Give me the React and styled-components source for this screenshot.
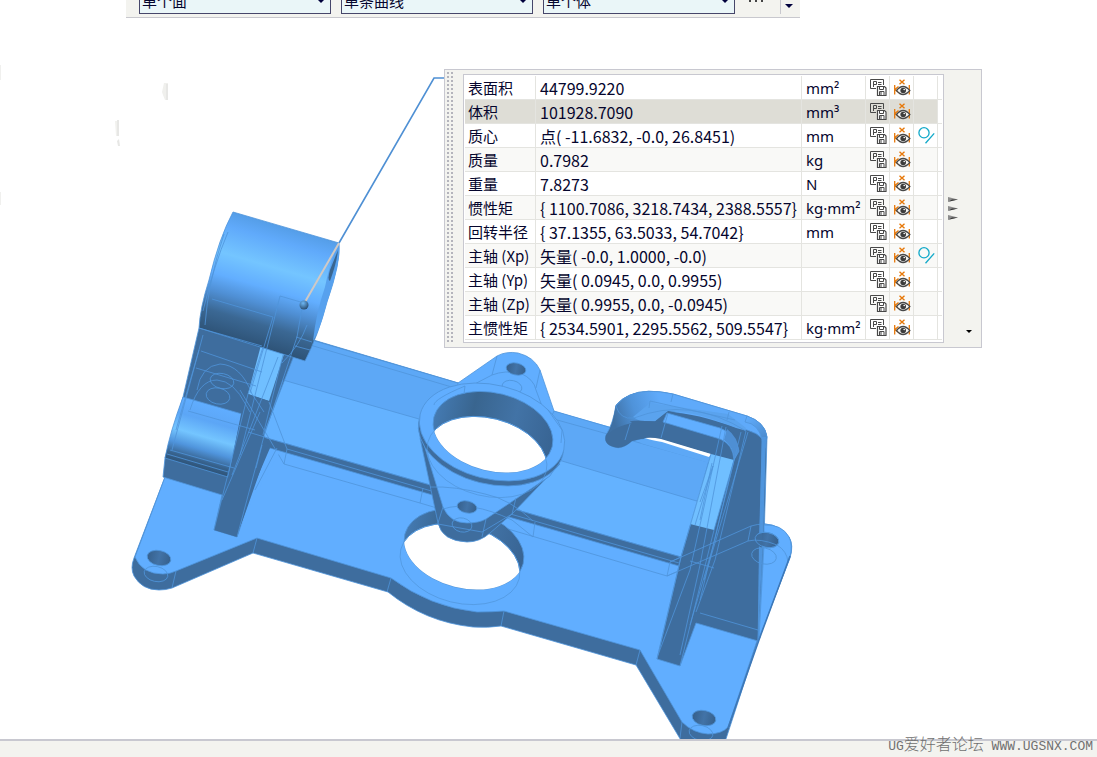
import React from 'react'
import styled, { createGlobalStyle } from 'styled-components'

const filters = [
    { id: 'face', label: '面规则', value: '单个面' },
    { id: 'curve', label: '曲线规则', value: '单条曲线' },
    { id: 'body', label: '体规则', value: '单个体' },
];

const rows = [
    { name: '表面积', value: '44799.9220', unit: 'mm²' },
    { name: '体积', value: '101928.7090', unit: 'mm³', active: true },
    { name: '质心', value: '点( -11.6832, -0.0, 26.8451)', unit: 'mm', geometry: true },
    { name: '质量', value: '0.7982', unit: 'kg' },
    { name: '重量', value: '7.8273', unit: 'N' },
    { name: '惯性矩', value: '{ 1100.7086, 3218.7434, 2388.5557}', unit: 'kg·mm²' },
    { name: '回转半径', value: '{ 37.1355, 63.5033, 54.7042}', unit: 'mm' },
    { name: '主轴 (Xp)', value: '矢量( -0.0, 1.0000, -0.0)', unit: '', geometry: true },
    { name: '主轴 (Yp)', value: '矢量( 0.0945, 0.0, 0.9955)', unit: '' },
    { name: '主轴 (Zp)', value: '矢量( 0.9955, 0.0, -0.0945)', unit: '' },
    { name: '主惯性矩', value: '{ 2534.5901, 2295.5562, 509.5547}', unit: 'kg·mm²' },
];

export default function App() {
    return <Page>
        <GlobalStyle />
        <SelectionBar />
        <Viewport>
            <Model />
            <MeasurePanel />
        </Viewport>
        <StatusBar>
            <Watermark>UG<span>爱好者论坛</span> WWW.UGSNX.COM</Watermark>
        </StatusBar>
    </Page>
}

function SelectionBar() {
    return <Bar>
        {filters.map(({ id, label, value }) => (
            <Field key={id}>
                <Select id={id} aria-label={label} defaultValue={value}>
                    <option>{value}</option>
                </Select>
                <svg width="10" height="6" viewBox="0 0 10 6"><path d="M1 0H9V1L5 5L1 1Z" fill="#00003c" /></svg>
            </Field>
        ))}
        <MoreButton aria-label="更多">
            <svg width="14" height="2" viewBox="0 0 14 2"><path d="M0 0h2v2H0zM6 0h2v2H6zM12 0h2v2h-2z" fill="#444" /></svg>
        </MoreButton>
        <OverflowButton aria-label="工具条选项">
            <svg width="8" height="4" viewBox="0 0 8 4"><path d="M0 0H8L4 4Z" fill="#00003c" /></svg>
        </OverflowButton>
    </Bar>
}

function MeasurePanel() {
    return <Panel>
        <Grip />
        <TableFrame>
            <Table>
                <tbody>
                    {rows.map((row) => (
                        <Row key={row.name} $active={row.active}>
                            <NameCell scope="row">{row.name}</NameCell>
                            <ValueCell>{row.value}</ValueCell>
                            <UnitCell>{row.unit}</UnitCell>
                            <IconCell><IconButton aria-label="创建表达式"><ExpressionIcon /></IconButton></IconCell>
                            <IconCell><IconButton aria-label="显示注释"><AnnotationIcon /></IconButton></IconCell>
                            <IconCell>
                                {row.geometry && <IconButton aria-label="创建几何体"><GeometryIcon /></IconButton>}
                            </IconCell>
                            <EndCell />
                        </Row>
                    ))}
                </tbody>
            </Table>
        </TableFrame>
        <Side>
            <ExpandButton aria-label="展开">
                <svg width="10" height="25" viewBox="0 0 10 25">
                    {[0, 9, 18].map((y) => <g key={y}>
                        <path d={`M0 ${y}L10 ${y + 2.5}L0 ${y + 5}Z`} fill="#8c8c8c" />
                        <path d={`M1 ${y + 4.5}L10 ${y + 2.5}L4 ${y + 2.5}Z`} fill="#333" />
                    </g>)}
                </svg>
            </ExpandButton>
            <MenuButton aria-label="选项">
                <svg width="6" height="3" viewBox="0 0 6 3"><path d="M0 0H6L3 3Z" fill="#000" /></svg>
            </MenuButton>
        </Side>
    </Panel>
}

function ExpressionIcon() {
    return <svg width="17" height="17" viewBox="0 0 17 17" fill="none" stroke="#484848">
        <path d="M6 9.5H.5V.5H13.5V6" />
        <path d="M3.5 8V2.5H6.5V5.5H3.5M8 3.5H11.5M8 5.5H11.5" strokeWidth="1" />
        <path d="M7.5 7.5H14.5L16 9V16.5H7.5Z" fill="#fff" strokeWidth="1.2" />
        <path d="M9.5 8V10.5H13.5V8M9.5 16V12.5H14V16M11 13V16" />
    </svg>
}

function AnnotationIcon() {
    return <svg width="17" height="17" viewBox="0 0 17 17" fill="none">
        <path d="M5.5 .8L10.5 5.2M10.5 .8L5.5 5.2" stroke="#e6780a" strokeWidth="1.4" />
        <path d="M.7 6V15.5M15.3 6V15.5M1 10.5L4.5 7.5M1 10.5L4 13" stroke="#e6780a" strokeWidth="1.3" />
        <path d="M2.5 11.5Q9 3.5 15.8 11.5Q9 19.5 2.5 11.5Z" fill="#f6f6f4" stroke="#484848" strokeWidth="1.3" />
        <circle cx="9.2" cy="11.5" r="2.8" fill="#3c3c3c" />
        <circle cx="10.2" cy="10.5" r=".8" fill="#fff" />
    </svg>
}

function GeometryIcon() {
    return <svg width="17" height="17" viewBox="0 0 17 17" fill="none" stroke="#12a9c9" strokeWidth="1.3">
        <circle cx="6" cy="5.8" r="5.1" />
        <path d="M7.5 16.2L16.2 6.4" />
    </svg>
}

const light = '#61aeff';
const dark = '#3e6d9e';
const edge = '#4f94da';

function Hole({ cx, cy, rx = 12, ry = 7.5 }) {
    return <ellipse cx={cx} cy={cy} rx={rx} ry={ry} transform={`rotate(12 ${cx} ${cy})`} fill="url(#holeShade)" stroke={edge} />
}

function HoleWire({ cx, cy, rx = 12, ry = 7.5 }) {
    return <ellipse cx={cx} cy={cy} rx={rx} ry={ry} transform={`rotate(12 ${cx} ${cy})`} fill="none" stroke={edge} />
}

// Bore = wall ellipse, with the see-through part clipped by the far rim
function Bore({ id, cx, cy, dx, dy }) {
    return <g>
        <clipPath id={id}>
            <ellipse cx={cx} cy={cy} rx="61" ry="39" transform={`rotate(14 ${cx} ${cy})`} />
        </clipPath>
        <ellipse cx={cx} cy={cy} rx="61" ry="39" transform={`rotate(14 ${cx} ${cy})`} fill="url(#boreShade)" stroke={edge} />
        <g clipPath={`url(#${id})`}>
            <ellipse cx={cx + dx} cy={cy + dy} rx="61" ry="39" transform={`rotate(14 ${cx + dx} ${cy + dy})`} fill="#fff" stroke={edge} />
        </g>
        <ellipse cx={cx + dx} cy={cy + dy} rx="61" ry="39" transform={`rotate(14 ${cx + dx} ${cy + dy})`} fill="none" stroke={edge} strokeOpacity=".8" />
    </g>
}

function Model() {
    return <Drawing viewBox="0 18 1097 721" width="1097" height="721" strokeWidth=".8" aria-hidden="true">
        <defs>
            <linearGradient id="bossShade" gradientUnits="userSpaceOnUse" x1="235" y1="213" x2="201" y2="330">
                <stop offset="0" stopColor="#559ee8" />
                <stop offset=".12" stopColor="#60aafb" />
                <stop offset=".34" stopColor="#74c5ff" />
                <stop offset=".52" stopColor="#62aeff" />
                <stop offset=".66" stopColor="#4f8fd4" />
                <stop offset=".82" stopColor="#3b6894" />
                <stop offset="1" stopColor="#2e5377" />
            </linearGradient>
            <linearGradient id="pinShade" gradientUnits="userSpaceOnUse" x1="183" y1="397" x2="165" y2="459">
                <stop offset="0" stopColor="#60adff" />
                <stop offset=".25" stopColor="#5ca6f6" />
                <stop offset=".5" stopColor="#74c5ff" />
                <stop offset=".7" stopColor="#5095dd" />
                <stop offset=".88" stopColor="#37628d" />
                <stop offset="1" stopColor="#2e5377" />
            </linearGradient>
            <linearGradient id="holeShade">
                <stop offset="0" stopColor="#36608c" />
                <stop offset=".5" stopColor="#4273a7" />
                <stop offset="1" stopColor="#36608c" />
            </linearGradient>
            <linearGradient id="boreShade">
                <stop offset="0" stopColor="#447ab2" />
                <stop offset=".3" stopColor="#39658f" />
                <stop offset=".65" stopColor="#4273a6" />
                <stop offset="1" stopColor="#386493" />
            </linearGradient>
            <linearGradient id="hookShade" gradientUnits="userSpaceOnUse" x1="612" y1="415" x2="660" y2="400">
                <stop offset="0" stopColor="#3f70a3" />
                <stop offset=".45" stopColor="#4f93da" />
                <stop offset="1" stopColor="#5faafa" />
            </linearGradient>
            <linearGradient id="cornerShade" gradientUnits="userSpaceOnUse" x1="750" y1="415" x2="765" y2="440">
                <stop offset="0" stopColor="#60acfc" />
                <stop offset="1" stopColor="#4a89cb" />
            </linearGradient>
            <radialGradient id="ballShade" cx=".4" cy=".3" r=".7">
                <stop offset="0" stopColor="#6db7f5" />
                <stop offset="1" stopColor="#2a4d70" />
            </radialGradient>
        </defs>

        <g fill="#e7e7e5">
            <path d="M164 83H168V100H165L163 95L162 92Z" fill="#f0f0ed" />
            <path d="M166 84H168V100H166Z" />
            <path d="M115 121H119V136H116Z" fill="#f1f1ee" />
            <path d="M117 120H119V136H117ZM117 141L119 139L120 146H118Z" />
            <path d="M0 65H1V80H0ZM0 192H1V205H0Z" fill="#f0f0ee" />
        </g>

        {/* base plate: side walls first, then the top face */}
        <path fill={dark} stroke={edge} d="M165 477L134 558Q130 568 134 576Q142 590 159 590Q166 590 172 588L253 553L388 592Q425 622 473 627Q488 628 501 626L636 665L682 742H725L758 641L790 558Q794 545 789 537Q780 525 765 524L610 428L300 336L200 390Z" />
        <path fill={light} stroke={edge} d="M165 477L135 557Q142 574 163 574Q170 574 176 571L257 538L391 578Q430 607 477 612Q492 612 504 611L640 650L682 722Q693 733 708 734Q722 734 728 727L757 641L789 558Q793 545 789 537Q780 525 765 524L720 500L610 480L280 400L200 420Z" />
        <path fill="none" stroke={edge} d="M257 538L253 553M391 578L387 592M504 611L501 626M640 650L636 665M682 722L680 738M176 571L172 588" />

        {/* raised back channel */}
        <path fill="#5da8f6" d="M295 335L458 383L554 411L735 462L700 502L262 376Z" />
        <path fill="none" stroke={edge} d="M315 341L458 383M554 411L612 428M300 342L455 388M550 418L712 463" />
        <path fill="#64b2ff" stroke={edge} d="M283 380L419 419L562 461L700 502L681 557L263 437Z" />
        <path fill={dark} stroke={edge} d="M263 437L681 557L679 566L266 447Z" />
        <path fill="none" stroke={edge} d="M287 449L679 563M270 440L284 464L420 503L667 576L670 562L750 526M284 464L287 449M420 503L423 488M533 537L535 522M667 576L748 541" />

        {/* left rib and block */}
        <path fill={dark} stroke={edge} d="M199 328L183 397L165 458L163 477L222 495L214 530L237 537L268 447L263 436L295 353L305 355V340Z" />
        <path fill="#70bfff" d="M261 345L285 351L269 401L248 394Z" />
        <path fill="url(#pinShade)" stroke={edge} d="M183 397L242 414L228 477L165 458Q170 432 183 397Z" />
        <path fill={dark} d="M248 394L269 401L264 436L270 447L237 537L214 530L230 470L241 414Z" />
        <path fill={light} d="M268 448L280 452L252 500L237 537Z" />
        <path fill={dark} d="M266 447L270 448L252 490L240 525Z" />

        {/* big boss */}
        <path fill="url(#bossShade)" stroke={edge} d="M233 212L339 243Q341 262 327 302Q318 336 305 361L199 328Q200 308 209 280Q219 238 233 212Z" />
        <path fill="#57a1ee" d="M339 243Q341 262 327 302Q320 330 313 341Q316 313 325 287Q330 262 339 243Z" />
        <path fill="#39658f" d="M338 250Q337 262 330 281Q327 280 330 270Z" />
        <path fill="none" stroke={edge} d="M228 232Q214 265 203 311M224 234Q208 282 205 325M212 299L273 317M273 317L250 393M280 296L240 455M280 296L304 303M199 328L262 346M302 308L297 337L264 436M307 325Q300 345 282 363M296 337L312 342M295 346L310 350M201 351L262 372M196 368L256 386M199 350L176 430M203 335L172 450M263 347L248 394M283 355L263 435M278 357L232 475M269 402L287 449M240 390L270 440M248 394L214 530M260 412L222 500M264 436L237 537M277 448L255 490M283 380L272 413M188 411L255 430M170 450L234 468M167 454L228 472M248 432L268 438M262 445L256 468" />
        <path fill="none" stroke={edge} d="M197 390Q201 366 220 364Q241 365 252 394L264 412M190 410Q199 380 217 380Q234 381 246 405L250 412" />
        <HoleWire cx={222} cy={381} />
        <HoleWire cx={218} cy={396} rx={12} ry={8} />

        {/* right hook */}
        <path fill={dark} stroke={edge} d="M616 405Q622 398 630 395Q646 388 673 394L747 416Q765 422 767 437L764 540L758 641L696 623L680 666L657 659L681 557L711 454L662 440Q648 436 632 441Q622 450 614 447Q603 444 606 435Q613 424 616 405Z" />
        <path fill="url(#hookShade)" stroke={edge} d="M616 406Q622 398 630 395Q646 388 673 394L747 416Q762 424 764 440Q756 432 747 430L667 410L655 421Q638 420 630 424Q612 414 616 406Z" />
        <path fill="#5aa3ee" d="M650 403L728 414L746 428L745 433L735 428Q700 412 668 411L655 421L640 421L633 417Z" />
        <path fill={dark} d="M606 435Q622 418 645 421L663 422L722 439Q733 445 734 460L711 454L662 440Q648 436 632 441Q622 450 614 447Q603 444 606 435Z" />
        <path fill="url(#hookShade)" d="M612 425Q614 414 616 405Q617 413 626 418L632 423Q617 426 609 433Z" />
        <path fill={dark} d="M667 413Q690 411 736 428L747 431L744 448Q742 434 720 427Z" />
        <path fill={light} stroke={edge} d="M667 413L720 428Q736 434 739 451L734 460Q733 444 720 439L663 422Z" />
        <path fill="#4e8fd4" d="M727 429Q738 437 739 451L734 459Q733 446 724 440Z" />
        <path fill="#5da8f6" d="M645 438L662 440L712 455L709 463L640 443Z" />
        <path fill="#fff" d="M645 438Q652 437 661 439L711 454L709 457L662 442Q650 440 645 438Z" />
        <path fill="url(#cornerShade)" stroke={edge} d="M747 416Q765 422 767 437L765 448L762 440Q759 424 745 422Z" />
        <path fill="#4f95de" d="M762 437H766L763 540L758 640L759 540Z" />

        {/* right rib */}
        <path fill="#70bfff" d="M711 454L734 460L714 530L690 524Z" />
        <path fill="none" stroke={edge} d="M711 454L681 557L657 659M734 460L714 530L680 666M722 426L690 570L658 655M726 427L700 565L680 655M746 431L715 560L696 612M741 432L712 550L690 625M748 432L704 580M762 440L760 540L758 640M765 440L762 560L760 638M700 613L758 630M690 561L714 568M700 502L713 466L695 525M712 463L700 520M734 460L700 600M650 401L735 420M650 401L649 408M673 394L671 402M729 412L727 420M668 413L661 438M630 424L625 440M616 406Q620 420 634 418Q690 396 746 431" />

        {/* right lug */}
        <path fill={light} stroke={edge} d="M764 525Q782 524 789 537Q793 545 790 557L759 638L764 545Z" />
        <Hole cx={767} cy={540} />
        <path fill={dark} d="M754 534H762V548Q754 545 754 534Z" />
        <HoleWire cx={767} cy={540} />
        <HoleWire cx={764} cy={556} rx={12.5} ry={8} />
        <path fill="none" stroke={edge} d="M670 562L751 526Q757 524 765 524M667 576L748 541Q760 538 777 545Q787 551 788 562M751 526L748 541" />
        <path fill="none" stroke="#3d78b8" strokeWidth="1.5" d="M790 556L759 640L728 728" />

        <Hole cx={159} cy={558} />
        <HoleWire cx={156} cy={574} />
        <Hole cx={704} cy={718} />
        <HoleWire cx={701} cy={733} />
        <Bore id="baseBore" cx={464} cy={549} dx={-4} dy={15} />

        {/* centre flange */}
        <path fill={light} stroke={edge} d="M458 383L497 356Q506 351 518 353Q534 357 540 370L554 411L540 440H450Z" />
        <path fill="none" stroke={edge} d="M497 356L492 375L434 405M492 375Q505 370 520 373Q534 379 536 390L552 433M540 370L536 388" />
        <Hole cx={516} cy={369} rx={10} ry={6} />
        <HoleWire cx={512} cy={387} rx={10} ry={6.5} />
        <path fill={dark} stroke={edge} d="M420 438L438 523Q442 541 467 542Q480 542 490 533L512 514L560 464Z" />
        <path fill={light} stroke={edge} d="M422 438L443 507Q450 523 467 523Q479 523 486 519L550 476L560 460Z" />
        <ellipse cx="491" cy="437" rx="74" ry="47" transform="rotate(14 491 437)" fill={dark} stroke={edge} />
        <ellipse cx="492" cy="432" rx="74" ry="47" transform="rotate(14 492 432)" fill={light} stroke={edge} />
        <Bore id="flangeBore" cx={493} cy={432} dx={-6} dy={25} />
        <path fill="none" stroke={edge} d="M434 405Q434 399 465 386L464 394M548 410L562 430L561 443M430 487Q455 486 485 494Q510 499 533 521M443 507L438 523M486 519L482 537M438 524L482 532L512 514L516 498M443 509Q470 500 512 520L533 537" />
        <Hole cx={467} cy={507} rx={10} ry={6} />
        <HoleWire cx={462} cy={525} rx={10} ry={7} />

        {/* leader */}
        <path fill="none" stroke="#4f90d4" strokeWidth="1.6" d="M445 78H434L339 243" />
        <path fill="none" stroke="#cfc9c6" strokeWidth="2" d="M339 243L305 302" />
        <circle cx="304" cy="305" r="4.5" fill="url(#ballShade)" />
    </Drawing>
}

const GlobalStyle = createGlobalStyle`
    body {
        margin: 0;
        background: #fff;
        color: #05052d;
        font-family: "Noto Sans CJK SC", "Noto Sans", sans-serif;
        font-size: 15px;
    }
    * {
        box-sizing: border-box;
    }
    button {
        padding: 0;
        border: 0;
        background: none;
        display: flex;
    }
`;

const Page = styled.div`
    min-height: 100vh;
    display: flex;
    flex-direction: column;
    overflow: hidden;
`;

const Bar = styled.div`
    align-self: flex-start;
    display: flex;
    align-items: flex-end;
    height: 18px;
    margin-left: 126px;
    padding: 0 7px 3px 13px;
    overflow: hidden;
    background: #f3f3ef;
    border-bottom: 1px solid #c8c8ce;
`;

const Field = styled.div`
    display: flex;
    align-items: center;
    margin-right: 10px;
    svg {
        margin-left: -15px;
        margin-right: 5px;
        pointer-events: none;
    }
`;

const Select = styled.select`
    appearance: none;
    width: 192px;
    height: 26px;
    padding: 0 20px 0 2px;
    border: 1px solid #46466a;
    border-radius: 0;
    background: #eaf6f8;
    color: #05052d;
    font: inherit;
    line-height: 22px;
`;

const MoreButton = styled.button`
    align-self: flex-start;
    margin: 0 17px 0 4px;
`;

const OverflowButton = styled.button`
    align-self: stretch;
    padding: 4px 0 0 4px;
    border-left: 1px solid #c8c8ce;
`;

const Viewport = styled.main`
    position: relative;
    flex: 1;
    overflow: hidden;
`;

const Drawing = styled.svg`
    display: block;
`;

// floating window over the graphics area
const Panel = styled.section`
    position: absolute;
    top: 51px;
    left: 444px;
    display: flex;
    background: #f3f3ef;
    border: 1px solid #c8c8d0;
`;

const Grip = styled.div`
    width: 6px;
    margin: 2px 10px 4px 2px;
    background:
        repeating-linear-gradient(to bottom, transparent 0 2px, #f3f3ef 2px 4px),
        repeating-linear-gradient(to right, #b4b4bc 0 2px, #f3f3ef 2px 4px);
`;

const TableFrame = styled.div`
    margin: 4px 0;
    padding: 1px 1px 2px;
    background: #fff;
    border: 1px solid #c8c8d0;
`;

const Table = styled.table`
    border-collapse: separate;
    border-spacing: 0;
    white-space: nowrap;
`;

const Row = styled.tr`
    height: 24px;
    background: ${({ $active }) => $active ? '#deddd6' : '#fff'};
    &:nth-child(even) {
        background: ${({ $active }) => $active ? '#deddd6' : '#f9f9f7'};
    }
`;

const Cell = styled.td`
    height: 24px;
    padding: 0 3px 0 4px;
    border-right: 1px solid #e4e4e0;
    border-bottom: 1px solid #e4e4e0;
    line-height: 22px;
    text-align: left;
    font-weight: 400;
`;

const NameCell = styled(Cell).attrs({ as: 'th' })`
    width: 71px;
    padding-left: 3px;
`;

const ValueCell = styled(Cell)`
    width: 266px;
    font-size: 16px;
`;

const UnitCell = styled(Cell)`
    width: 64px;
    font-family: "Noto Sans", sans-serif;
`;

const IconCell = styled(Cell)`
    width: 24px;
    padding: 0 0 0 4px;
`;

const EndCell = styled(Cell)`
    width: 4px;
    padding: 0;
    border-right: 0;
    background: #fff;
`;

const IconButton = styled.button`
    cursor: pointer;
`;

const Side = styled.div`
    display: flex;
    flex-direction: column;
    width: 37px;
    padding: 127px 9px 14px 4px;
    justify-content: space-between;
`;

const ExpandButton = styled.button`
    align-self: flex-start;
`;

const MenuButton = styled.button`
    align-self: flex-end;
`;

const StatusBar = styled.footer`
    display: flex;
    justify-content: flex-end;
    align-items: flex-end;
    height: 18px;
    padding: 0 4px 2px;
    background: #f3f3ef;
    border-top: 2px solid #c8c8d0;
`;

const Watermark = styled.span`
    position: relative;
    color: #707070;
    font-family: "Liberation Mono", "Noto Sans CJK SC", monospace;
    font-size: 13px;
    line-height: 16px;
    white-space: pre;
    span {
        font-family: "Noto Sans CJK SC", sans-serif;
        font-size: 16px;
        font-weight: 300;
    }
`;
